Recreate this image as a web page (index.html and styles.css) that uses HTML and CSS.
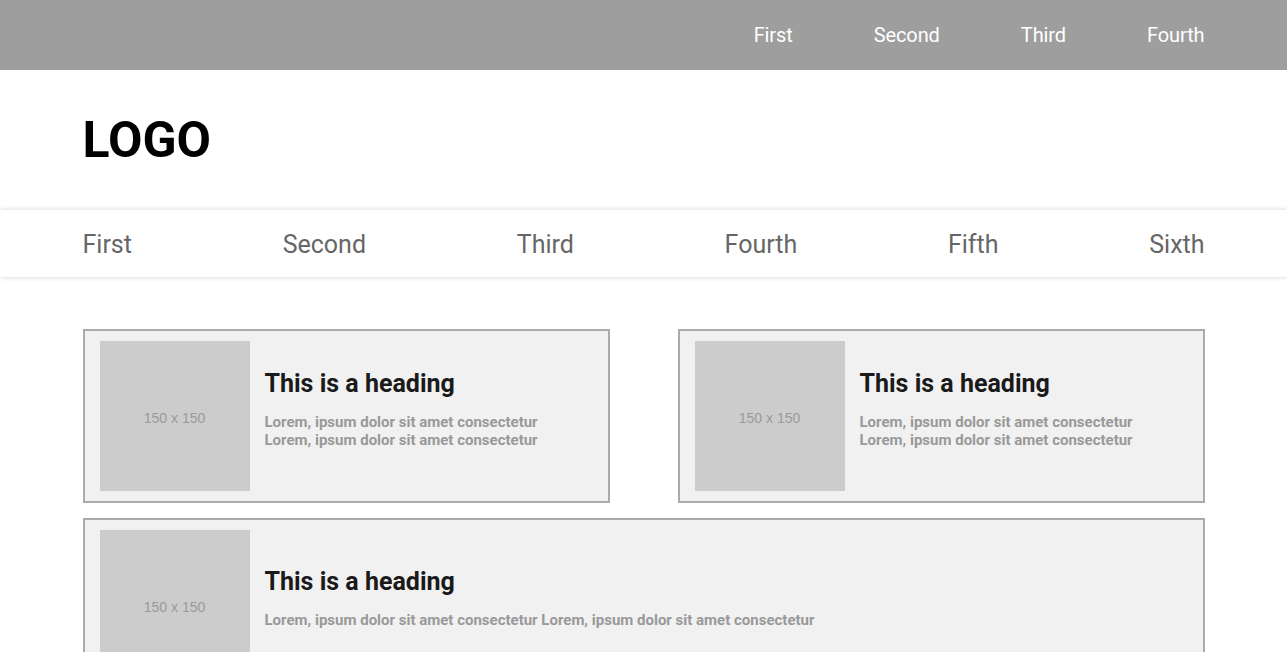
FILE: index.html
```html
<!DOCTYPE html>
<html lang="en">
<head>
<meta charset="utf-8">
<title>Layout</title>
<link rel="stylesheet" href="styles.css">
</head>
<body>
<div class="topbar">
  <nav class="wrap topnav">
    <a href="#">First</a>
    <a href="#">Second</a>
    <a href="#">Third</a>
    <a href="#">Fourth</a>
  </nav>
</div>
<header class="wrap brand">
  <div class="logo">LOGO</div>
</header>
<div class="mainnav">
  <nav class="wrap mainnav-inner">
    <a href="#">First</a>
    <a href="#">Second</a>
    <a href="#">Third</a>
    <a href="#">Fourth</a>
    <a href="#">Fifth</a>
    <a href="#">Sixth</a>
  </nav>
</div>
<main class="wrap cards">
  <article class="card">
    <div class="thumb">150 x 150</div>
    <div class="card-body">
      <h2>This is a heading</h2>
      <p>Lorem, ipsum dolor sit amet consectetur<br>Lorem, ipsum dolor sit amet consectetur</p>
    </div>
  </article>
  <article class="card">
    <div class="thumb">150 x 150</div>
    <div class="card-body">
      <h2>This is a heading</h2>
      <p>Lorem, ipsum dolor sit amet consectetur<br>Lorem, ipsum dolor sit amet consectetur</p>
    </div>
  </article>
  <article class="card wide">
    <div class="thumb">150 x 150</div>
    <div class="card-body">
      <h2>This is a heading</h2>
      <p>Lorem, ipsum dolor sit amet consectetur Lorem, ipsum dolor sit amet consectetur</p>
    </div>
  </article>
</main>
</body>
</html>
```
FILE: styles.css
```css
* { box-sizing: border-box; }
html, body { margin: 0; padding: 0; }
body {
  font-family: Roboto, "Liberation Sans", Arial, sans-serif;
  background: #fff;
  color: #222;
}
a { text-decoration: none; }
.wrap {
  width: 1122px;
  margin: 0 auto;
}
.topbar {
  background: #9e9e9e;
  height: 70px;
}
.topnav {
  height: 70px;
  display: flex;
  justify-content: flex-end;
  align-items: center;
  gap: 81px;
}
.topnav a {
  color: #fff;
  font-size: 20px;
  letter-spacing: -0.1px;
}
.brand {
  height: 140px;
  display: flex;
  align-items: center;
}
.logo {
  font-size: 50px;
  font-weight: 700;
  color: #000;
}
.mainnav {
  background: #fff;
  box-shadow: 0 0 5px rgba(0, 0, 0, 0.18);
  position: relative;
}
.mainnav-inner {
  height: 67px;
  padding-top: 2px;
  display: flex;
  justify-content: space-between;
  align-items: center;
}
.mainnav-inner a {
  color: #666;
  font-size: 25px;
}
.cards {
  padding-top: 52px;
  display: grid;
  grid-template-columns: 1fr 1fr;
  column-gap: 68px;
  row-gap: 15px;
}
.card {
  background: #f1f1f1;
  border: 2px solid #aaa;
  padding: 10px 15px;
  display: flex;
  align-items: center;
  gap: 15px;
}
.card.wide { grid-column: 1 / -1; }
.thumb {
  flex: 0 0 150px;
  height: 150px;
  padding-top: 4px;
  background: #cccccc;
  color: #9a9a9a;
  font-family: "Liberation Sans", Arial, sans-serif;
  font-size: 14px;
  display: flex;
  align-items: center;
  justify-content: center;
}
.card-body {
  padding-top: 2px;
}
.card-body h2 {
  margin: 0;
  font-size: 25px;
  font-weight: 700;
  color: #1a1a1a;
  line-height: 28px;
}
.card-body p {
  margin: 15px 0;
  font-size: 15px;
  line-height: 18px;
  font-weight: 700;
  color: #999;
}
```
